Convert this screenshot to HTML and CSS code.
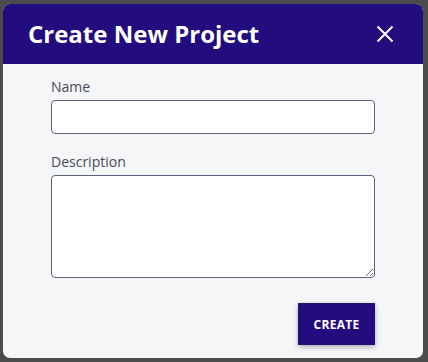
FILE: index.html
```html
<!DOCTYPE html>
<html lang="en">
<head>
  <meta charset="UTF-8" />
  <meta name="viewport" content="width=device-width, initial-scale=1.0"/>
  <title>Create New Project</title>
  <link rel="stylesheet" href="styles.css">
</head>
<body>
  <div class="dialog">
    <div class="dialog-header">
      <h2>Create New Project</h2>
      <button class="close" aria-label="Close">
        <svg width="18" height="18" viewBox="0 0 18 18">
          <path d="M1.5 1.5 L16.5 16.5 M16.5 1.5 L1.5 16.5" stroke="#fff" stroke-width="2" fill="none"/>
        </svg>
      </button>
    </div>

    <div class="dialog-body">
      <div class="form-group">
        <label for="nameInput">Name</label>
        <input type="text" id="nameInput" />
      </div>

      <div class="form-group">
        <label for="descInput">Description</label>
        <textarea id="descInput"></textarea>
      </div>

      <div class="actions">
        <button class="btn-create">Create</button>
      </div>
    </div>
  </div>
</body>
</html>
```

FILE: styles.css
```css
body {
  font-family: "Open Sans", Arial, sans-serif;
  background: #4b4b4b;
  margin: 0;
  padding: 4px 5px 4px 3px;
}

.dialog {
  width: 420px;
  height: 354px;
  background: #f5f6f8;
  border-radius: 7px;
  overflow: hidden;
  display: flex;
  flex-direction: column;
}

.dialog-header {
  height: 60px;
  background: #230c7e;
  display: flex;
  align-items: center;
  justify-content: space-between;
  padding: 0 29px 0 25px;
  flex-shrink: 0;
}

.dialog-header h2 {
  margin: 0;
  color: #fff;
  font-size: 24px;
  font-weight: 700;
  line-height: 32px;
}

.close {
  background: none;
  border: 0;
  padding: 0;
  width: 18px;
  height: 18px;
  cursor: pointer;
  display: block;
}

.close svg {
  display: block;
}

.dialog-body {
  padding: 13px 48px 0 48px;
}

.form-group {
  margin-bottom: 18px;
}

label {
  display: block;
  font-size: 14px;
  line-height: 20px;
  color: #4a4b57;
  margin-bottom: 3px;
}

input,
textarea {
  display: block;
  box-sizing: border-box;
  width: 324px;
  border: 1px solid #5c6178;
  border-radius: 4px;
  background: #fff;
  font-family: inherit;
  font-size: 14px;
  margin: 0;
}

input {
  height: 34px;
}

textarea {
  height: 103px;
  resize: vertical;
}

.actions {
  display: flex;
  justify-content: flex-end;
  margin-top: 25px;
}

.btn-create {
  width: 77px;
  height: 42px;
  background: #230c7e;
  color: #fff;
  border: 0;
  border-radius: 0;
  font-family: inherit;
  font-size: 12px;
  font-weight: 700;
  letter-spacing: 0.3px;
  text-transform: uppercase;
  box-shadow: 0 2px 5px rgba(0,0,0,0.3);
  cursor: pointer;
}
```
